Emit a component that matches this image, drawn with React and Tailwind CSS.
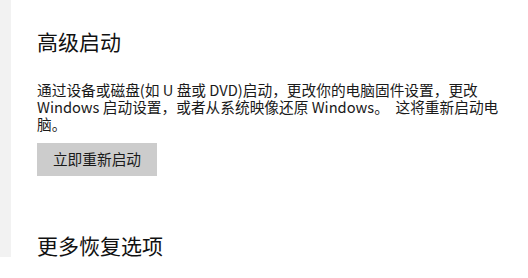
export default function App() {
  const font = { fontFamily: '"Noto Sans CJK SC", "Noto Sans", sans-serif' };
  return (
    <div className="w-[528px] h-[278px] bg-white overflow-hidden flex" style={font}>
      <div className="w-[11px] h-[257px] bg-[#f2f2f2] shrink-0" />
      <div className="pl-[26px] flex flex-col items-start">
        <h1 className="mt-[27px] text-[21px] leading-[28px] text-[#111] font-normal">高级启动</h1>
        <p className="mt-[26px] text-[14.7px] leading-[17px] text-[#1a1a1a] whitespace-nowrap">
          通过设备或磁盘(如 U 盘或 DVD)启动，更改你的电脑固件设置，更改<br />
          Windows 启动设置，或者从系统映像还原 Windows。&nbsp; 这将重新启动电<br />
          脑。
        </p>
        <button className="mt-[11px] w-[120px] h-[33px] bg-[#cccccc] text-[14.7px] text-[#1a1a1a]">立即重新启动</button>
        <h2 className="mt-[55px] text-[21px] leading-[28px] text-[#111] font-normal">更多恢复选项</h2>
      </div>
    </div>
  );
}
